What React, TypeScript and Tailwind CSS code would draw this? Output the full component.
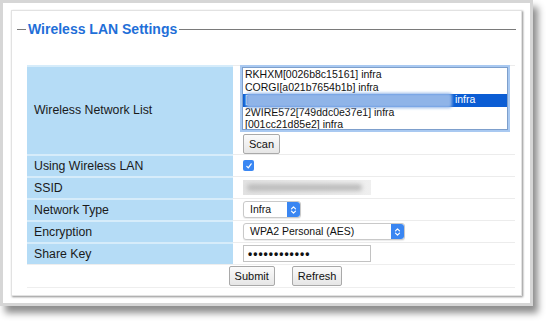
import React from "react";

const networks = [
  "RKHXM[0026b8c15161] infra",
  "CORGI[a021b7654b1b] infra",
  "",
  "2WIRE572[749ddc0e37e1] infra",
  "[001cc21d85e2] infra",
];

function Stepper() {
  return (
    <div className="flex h-full w-[13px] items-center justify-center rounded-r-[3px] bg-[#3a86f2]">
      <svg width="7" height="10" viewBox="0 0 7 10" fill="none" stroke="white" strokeWidth="1.2" strokeLinecap="round" strokeLinejoin="round">
        <path d="M1.5 3.8 L3.5 1.8 L5.5 3.8" />
        <path d="M1.5 6.2 L3.5 8.2 L5.5 6.2" />
      </svg>
    </div>
  );
}

function Select({ label, className }: { label: string; className: string }) {
  return (
    <div className={`flex h-[17px] items-center justify-between rounded-[3px] border border-[#c9c9c9] bg-white shadow-[0_1px_1px_rgba(0,0,0,0.08)] ${className}`}>
      <span className="pl-[6px] text-[10.5px] text-[#111]">{label}</span>
      <Stepper />
    </div>
  );
}

function Btn({ children }: { children: React.ReactNode }) {
  return (
    <button className="h-[20px] rounded-[2px] border border-[#a9a9a9] bg-gradient-to-b from-[#fbfbfb] to-[#e6e6e6] px-[5px] text-[11px] text-[#111]">
      {children}
    </button>
  );
}

function Row({ label, children }: { label: string; children: React.ReactNode }) {
  return (
    <div className="flex h-[22px] border-t border-[#ececec]">
      <div className="-mt-px flex w-[206px] items-center border-t-2 border-[#d6ecfa] bg-[#b5dcf6] pl-[7px]">{label}</div>
      <div className="flex flex-1 items-center pl-[10px]">{children}</div>
    </div>
  );
}

export default function App() {
  return (
    <div className="h-[325px] w-[550px] bg-white font-['Liberation_Sans',Arial,sans-serif]">
      <div className="h-[306px] w-[533px] border-[3px] border-[#d6d6d6] bg-white shadow-[5px_7px_7px_rgba(0,0,0,0.45)]">
        <div className="ml-[8px] mt-[7px] h-[286px] w-[511px] border border-[#e2e2e2] px-[5px] pt-[9px] shadow-[1px_1px_2px_rgba(0,0,0,0.45)]">
          {/* legend */}
          <div className="flex h-[18px] items-center">
            <div className="h-px w-[9px] bg-[#7a7a7a]" />
            <span className="px-[2px] text-[14px] font-bold text-[#1f6fd8]">Wireless LAN Settings</span>
            <div className="h-px flex-1 bg-[#7a7a7a]" />
          </div>

          <div className="ml-[10px] mr-px mt-[27px] text-[12.3px] text-[#1a1a1a]">
            {/* network list */}
            <div className="flex h-[89px] border-t border-[#ececec]">
              <div className="-mt-px flex w-[206px] items-center border-t-2 border-[#d6ecfa] bg-[#b5dcf6] pl-[7px]">Wireless Network List</div>
              <div className="flex flex-1 flex-col items-start pl-[9px] pt-px">
                <div className="h-[64px] w-[266px] overflow-hidden border border-[#7d9fcc] bg-white pt-px shadow-[0_0_0_2px_#a9c9f1]">
                  {networks.map((n, i) =>
                    i === 2 ? (
                      <div key={i} className="flex h-[12.5px] items-center bg-[#0b5dd4] pl-[2px] text-[10.5px] text-white">
                        <span>[</span>
                        <span className="-ml-[2px] h-[15px] w-[206px] rounded-[3px] bg-[#8fb4e8] blur-[1.5px]" />
                        <span className="ml-[3px]">infra</span>
                      </div>
                    ) : (
                      <div key={i} className="flex h-[12.5px] items-center pl-[2px] text-[10.5px] text-[#111]">{n}</div>
                    )
                  )}
                </div>
                <div className="ml-px mt-[4px]">
                  <Btn>Scan</Btn>
                </div>
              </div>
            </div>

            <Row label="Using Wireless LAN">
              <div className="flex h-[11px] w-[11px] items-center justify-center rounded-[2px] bg-[#3a87f3]">
                <svg width="8" height="8" viewBox="0 0 8 8" fill="none" stroke="white" strokeWidth="1.2" strokeLinecap="round" strokeLinejoin="round">
                  <path d="M1.8 4.3 L3.3 5.8 L6.2 1.8" />
                </svg>
              </div>
            </Row>

            <Row label="SSID">
              <div className="flex h-[15px] w-[128px] items-center overflow-hidden bg-gradient-to-r from-[#e2e2e2] to-[#efefef] pl-[4px]">
                <span className="h-[7px] w-[115px] rounded bg-[#bdbdbd] blur-[2px]" />
              </div>
            </Row>

            <Row label="Network Type">
              <Select label="Infra" className="w-[58px]" />
            </Row>

            <Row label="Encryption">
              <Select label="WPA2 Personal (AES)" className="w-[162px]" />
            </Row>

            <Row label="Share Key">
              <div className="flex h-[17px] w-[128px] items-center border border-[#c2c2c2] bg-white pl-[4px] text-[12px] font-black tracking-[1px] text-[#111]">
                ••••••••••••
              </div>
            </Row>

            <div className="flex h-[24px] items-center justify-center gap-[17px] border-y border-[#eeeeee] pl-[29px]">
              <Btn>Submit</Btn>
              <Btn>Refresh</Btn>
            </div>
          </div>
        </div>
      </div>
    </div>
  );
}
